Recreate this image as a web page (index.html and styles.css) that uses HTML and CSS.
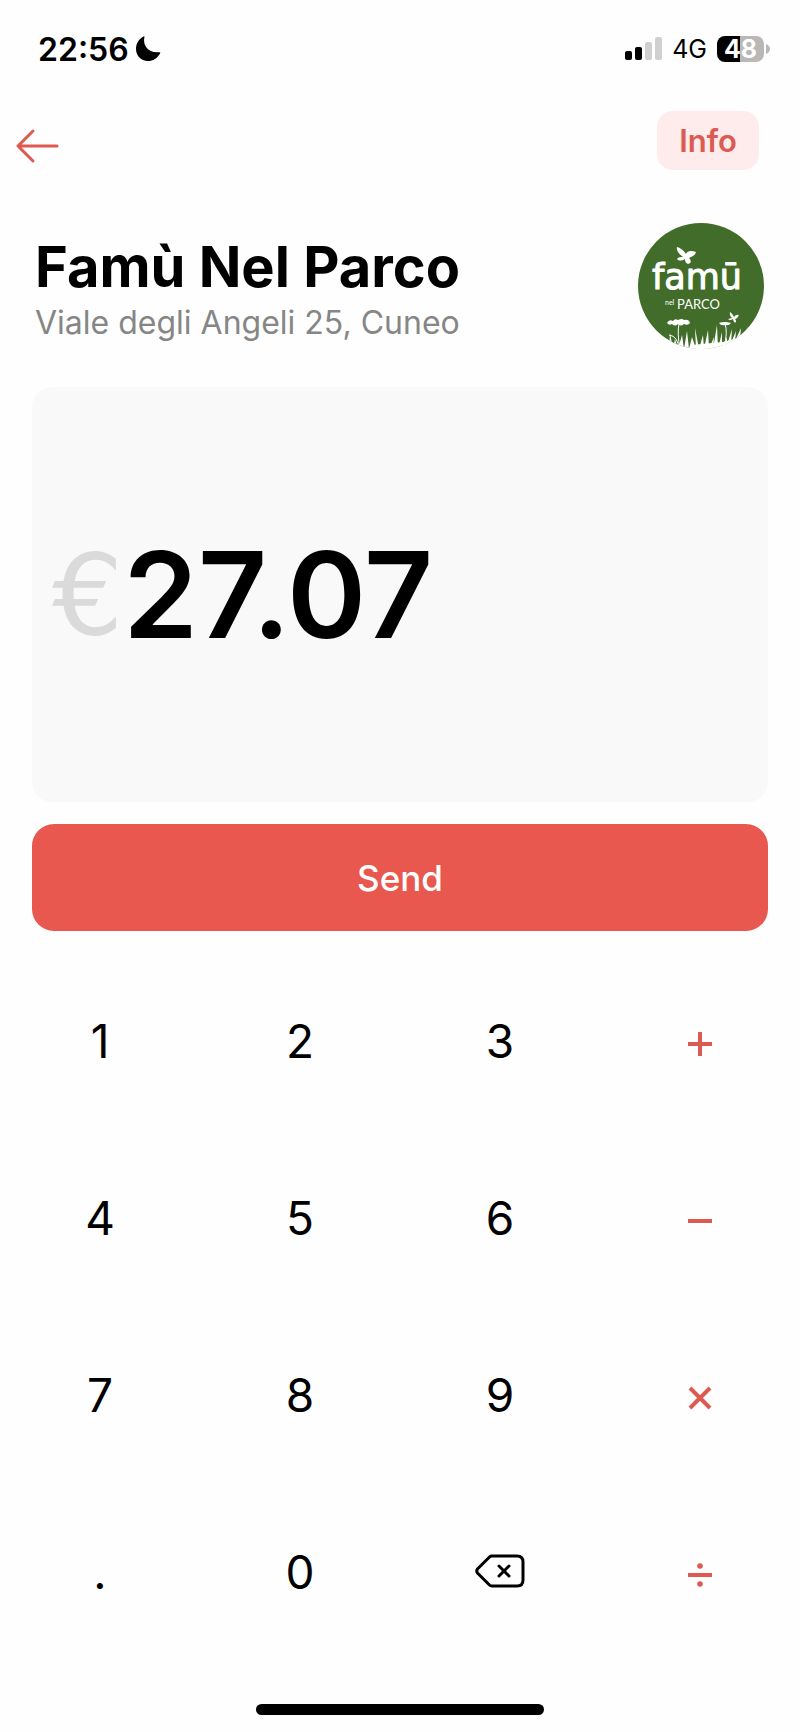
FILE: index.html
```
<!DOCTYPE html>
<html lang="en">
  <head>
    <meta charset="UTF-8">
    <meta name="viewport" content="width=device-width, initial-scale=1">
    <title>Famù Nel Parco</title>
    <link rel="stylesheet" href="styles.css">
  </head>
  <body>

  <div class="status">
    <div class="clock">
      <span>22:56</span>
      <svg class="moon" width="26" height="26" viewBox="0 0 26 26"><path d="M9.500 .8C7.500 8 12 17.500 24.500 16.200Q25.600 16 25.200 17C22.500 22.500 18 25 13 25C6 25 1 19.500 1 13C1 7.500 4 3 8.500 .6Q9.700 0 9.500 .8z"/></svg>
    </div>
    <div class="signal">
      <svg width="38" height="24" viewBox="0 0 38 24">
        <rect x="1" y="14" width="7" height="9" rx="2"/>
        <rect x="11" y="10" width="7" height="13" rx="2"/>
        <rect class="off" x="21" y="5" width="7" height="18" rx="2"/>
        <rect class="off" x="31" y="0" width="7" height="23" rx="2"/>
      </svg>
      <span class="network">4G</span>
      <span class="battery">48</span>
      <svg class="cap" width="4" height="10" viewBox="0 0 4 10"><path d="M0 0Q4 2 4 5T0 10z"/></svg>
    </div>
  </div>

  <nav class="nav">
    <button class="back" type="button" aria-label="Back">
      <svg width="44" height="34" viewBox="0 0 44 34"><path d="M41 17H2M17 2L2 17L17 32"/></svg>
    </button>
    <button class="info" type="button">Info</button>
  </nav>

  <header class="shop">
    <div>
      <h1>Famù Nel Parco</h1>
      <p>Viale degli Angeli 25, Cuneo</p>
    </div>
    <svg class="logo" width="126" height="126" viewBox="0 0 126 126">
      <clipPath id="round"><circle cx="63" cy="63" r="63"/></clipPath>
      <circle class="green" cx="63" cy="63" r="63"/>
      <g clip-path="url(#round)">
        <!-- butterflies -->
        <path d="M45 34C41 31 38 27 39 24C43 25 46 28 48 31C49 28 53 27 58 29C57 33 53 34 51 35C54 38 53 40 50 41C48 40 47 39 47 36C44 38 41 38 39 36C40 34 43 34 45 34z"/>
        <path d="M94 95Q91 92 92 89Q95 91 96 94Q98 91 101 92Q100 95 97 96Q99 98 97 100Q95 98 95 96Q92 98 90 96z"/>
        <!-- daisies -->
        <path d="M29 100Q31 96 35 98Q37 95 40 97Q44 95 46 97Q51 96 52 100Q50 103 46 101Q43 104 40 101Q37 104 34 101Q31 103 29 100z"/>
        <path d="M81 100Q86 98 93 100Q91 103 87 102Q83 103 81 100z"/>
        <path class="stem" d="M41 101Q39 110 42 126M87 101Q90 109 86 124M31 112Q40 113 41 126"/>
        <!-- grass -->
        <path class="ground" d="M50 126L54 122L64 121L85 119L103 114L101 126z"/>
        <path d="M31 126L32 110L35 126L37 116L40 126L44 112L46 126L49 108L51 126L54 114L58 126L57 105L61 126L65 112L66 126L70 107L71 126L76 114L75 126L79 102L80 126L84 109L84 124L89 114L89 122L94 106L93 120L98 108L97 118L103 105L102 116L110 104L104 126z"/>
      </g>
      <text class="brand" x="14" y="66">famū</text>
      <text class="nel" x="27" y="82">nel</text>
      <text class="parco" x="39" y="86">PARCO</text>
    </svg>
  </header>

  <main>
    <div class="amount"><span class="currency">€</span><output>27.07</output></div>
    <button class="send" type="button">Send</button>
  </main>

  <div class="keypad">
    <button type="button">1</button>
    <button type="button">2</button>
    <button type="button">3</button>
    <button class="op" type="button" aria-label="Plus">
      <svg width="28" height="34" viewBox="0 0 28 34"><path d="M2 20H26M14 8V32"/></svg>
    </button>

    <button type="button">4</button>
    <button type="button">5</button>
    <button type="button">6</button>
    <button class="op" type="button" aria-label="Minus">
      <svg width="28" height="34" viewBox="0 0 28 34"><path d="M2 20H26"/></svg>
    </button>

    <button type="button">7</button>
    <button type="button">8</button>
    <button type="button">9</button>
    <button class="op" type="button" aria-label="Times">
      <svg width="28" height="34" viewBox="0 0 28 34"><path d="M4 10L24 30M24 10L4 30"/></svg>
    </button>

    <button type="button">.</button>
    <button type="button">0</button>
    <button class="del" type="button" aria-label="Delete">
      <svg width="50" height="34" viewBox="0 0 50 34"><path d="M17 1H42Q48 1 48 7V25Q48 31 42 31H17Q15.500 31 14.500 30L2.500 18Q1 16 2.500 14L14.500 2Q15.500 1 17 1zM24 11L34 21M34 11L24 21"/></svg>
    </button>
    <button class="op" type="button" aria-label="Divide">
      <svg width="28" height="34" viewBox="0 0 28 34"><path d="M2 20H26"/><circle cx="14" cy="11" r="2.800"/><circle cx="14" cy="29" r="2.800"/></svg>
    </button>
  </div>

  <div class="home"></div>

  </body>
</html>
```
FILE: styles.css
```
* {
  box-sizing: border-box;
  }

body {
  margin: 0;
  background-color: #fefefe;
  color: #000000;
  font-family: Inter, "Liberation Sans", sans-serif;
  }

button {
  padding: 0;
  border: none;
  background: none;
  color: inherit;
  font-family: inherit;
  cursor: pointer;
  }

svg {
  display: block;
  overflow: visible;
  }

/* status bar */

.status {
  display: flex;
  justify-content: space-between;
  align-items: center;
  height: 98px;
  padding: 0 30px 0 38px;
  }

.clock, .signal {
  display: flex;
  align-items: center;
  }

.clock {
  gap: 6px;
  font-size: 32px;
  font-weight: 600;
  }

.signal .off {
  fill: #d0d0d0;
  }

.network {
  margin: 0 10px;
  font-size: 25px;
  }

.battery {
  width: 47px;
  border-radius: 8px;
  background: linear-gradient(to right, #000000 49%, #b8b8b8 49%);
  color: #ffffff;
  font-size: 25px;
  font-weight: 700;
  line-height: 26px;
  text-align: center;
  }

.cap {
  margin-left: 2px;
  fill: #b8b8b8;
  }

/* top buttons */

.nav {
  display: flex;
  justify-content: space-between;
  align-items: flex-start;
  padding: 13px 41px 0 16px;
  }

.back {
  height: 70px;
  }

.back path {
  fill: none;
  stroke: #e0594f;
  stroke-width: 3;
  stroke-linecap: round;
  stroke-linejoin: round;
  }

.info {
  width: 102px;
  height: 59px;
  border-radius: 16px;
  background-color: #fdeceb;
  color: #dc5a52;
  font-size: 31px;
  font-weight: 600;
  }

/* shop */

.shop {
  display: flex;
  justify-content: space-between;
  align-items: flex-end;
  padding: 42px 36px 38px 35px;
  }

.shop h1 {
  margin: 0;
  font-size: 56px;
  font-weight: 700;
  line-height: 60px;
  }

.shop p {
  margin: 0;
  color: #868686;
  font-size: 32px;
  line-height: 52px;
  }

.logo {
  flex: none;
  fill: #ffffff;
  }

.logo .green {
  fill: #416c2a;
  }

.logo .stem {
  fill: none;
  stroke: #ffffff;
  stroke-width: 1;
  }

.brand {
  font-family: "DejaVu Sans", sans-serif;
  font-size: 35px;
  stroke: #ffffff;
  stroke-width: 1;
  stroke-linejoin: round;
  }

.parco {
  font-family: Lato, sans-serif;
  font-size: 13px;
  }

.nel {
  font-family: Lato, sans-serif;
  font-size: 7px;
  }

/* amount */

main {
  display: flex;
  flex-direction: column;
  gap: 22px;
  padding: 0 32px;
  }

.amount {
  display: flex;
  align-items: center;
  min-height: 415px;
  padding: 0 20px;
  border-radius: 20px;
  background-color: #f9f9f9;
  font-size: 120px;
  font-weight: 600;
  }

.currency {
  color: #dadada;
  font-family: "DejaVu Sans", sans-serif;
  font-size: 112px;
  font-weight: 400;
  }

.send {
  height: 107px;
  border-radius: 22px;
  background-color: #e8584f;
  color: #ffffff;
  font-size: 35px;
  font-weight: 500;
  }

/* keypad */

.keypad {
  display: grid;
  grid-template-columns: repeat(4, 1fr);
  grid-auto-rows: 177px;
  margin-top: 21px;
  }

.keypad button {
  display: flex;
  align-items: center;
  justify-content: center;
  font-size: 46px;
  }

.op path {
  fill: none;
  stroke: #dc5a52;
  stroke-width: 4;
  }

.op circle {
  fill: #dc5a52;
  }

.del path {
  fill: none;
  stroke: #000000;
  stroke-width: 3;
  stroke-linecap: round;
  }

.home {
  width: 36%;
  height: 11px;
  margin: 44px auto 17px;
  border-radius: 6px;
  background-color: #000000;
  }
```
